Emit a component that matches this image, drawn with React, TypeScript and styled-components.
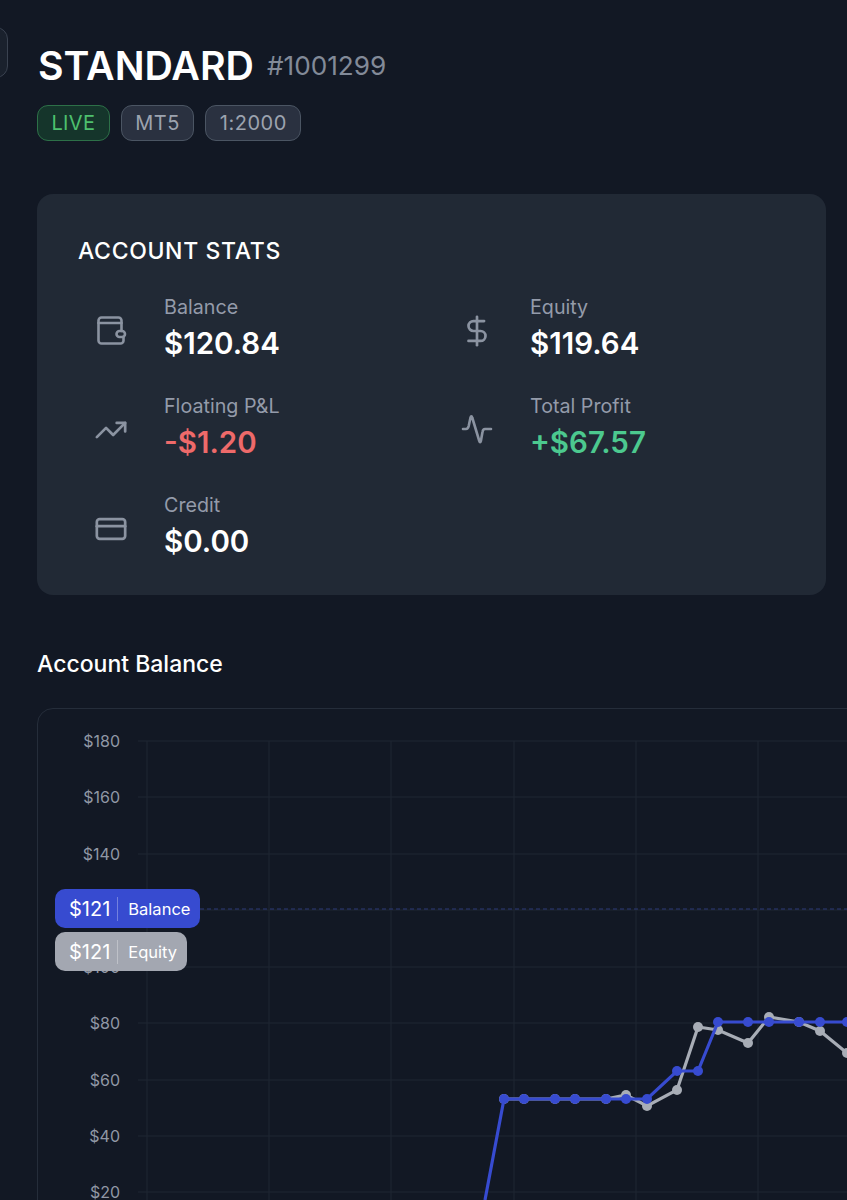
import React from "react";
import styled, { createGlobalStyle } from "styled-components";
import { CreditCard, DollarSign, TrendingUp } from "lucide-react";

const WalletIcon = () => (
  <svg width="34" height="34" viewBox="0 0 34 34" fill="none" stroke="currentColor" strokeWidth="2.6" strokeLinecap="round" strokeLinejoin="round">
    <path d="M27.5 17V6.5a3 3 0 0 0-3-3h-17a3 3 0 0 0-3 3v20a3 3 0 0 0 3 3h19a3 3 0 0 0 3-3V23" />
    <path d="M4.5 9h23" />
    <rect x="22.5" y="17" width="8.5" height="6" rx="3" />
  </svg>
);

const PulseIcon = () => (
  <svg width="34" height="34" viewBox="0 0 34 34" fill="none" stroke="currentColor" strokeWidth="2.6" strokeLinecap="round" strokeLinejoin="round">
    <path d="M3 16h3c1.5 0 2.2-1 2.7-3l1.8-8.5c.4-1.6 1.3-1.6 1.7 0L19.3 28c.4 1.6 1.2 1.6 1.6 0l1.6-9c.3-2 1-3 2.5-3H31" />
  </svg>
);

const stats = [
  { label: "Balance", value: "$120.84", tone: "plain", icon: <WalletIcon /> },
  { label: "Equity", value: "$119.64", tone: "plain", icon: <DollarSign size={34} strokeWidth={1.9} /> },
  { label: "Floating P&L", value: "-$1.20", tone: "loss", icon: <TrendingUp size={34} strokeWidth={1.9} /> },
  { label: "Total Profit", value: "+$67.57", tone: "gain", icon: <PulseIcon /> },
  { label: "Credit", value: "$0.00", tone: "plain", icon: <CreditCard size={34} strokeWidth={1.9} /> },
];

const axis = [
  { label: "$180", y: 741 },
  { label: "$160", y: 797 },
  { label: "$140", y: 854 },
  { label: "$120", y: 910 },
  { label: "$100", y: 967 },
  { label: "$80", y: 1023 },
  { label: "$60", y: 1080 },
  { label: "$40", y: 1136 },
  { label: "$20", y: 1192 },
];

const gridX = [147, 269, 391, 514, 636, 758];

const flat = [
  [504, 1099],
  [524, 1099],
  [555, 1099],
  [575, 1099],
  [606, 1099],
];

const balance = [
  ...flat,
  [626, 1099],
  [647, 1099],
  [677, 1071],
  [698, 1071],
  [718, 1022],
  [748, 1022],
  [769, 1022],
  [799, 1022],
  [820, 1022],
  [847, 1022],
];

const equity = [
  ...flat,
  [626, 1095],
  [647, 1106],
  [677, 1090],
  [698, 1027],
  [718, 1030],
  [748, 1043],
  [769, 1017],
  [799, 1022],
  [820, 1031],
  [847, 1053],
];

const toPoints = (list: number[][]) => list.map((p) => p.join(",")).join(" ");

const App = () => {
  return (
    <Page>
      <GlobalStyle />
      <BackButton />
      <TitleRow>
        <Title>STANDARD</Title>
        <AccountNo>#1001299</AccountNo>
      </TitleRow>
      <Tags>
        <Tag $live>LIVE</Tag>
        <Tag>MT5</Tag>
        <Tag>1:2000</Tag>
      </Tags>

      <StatsCard>
        <CardTitle>ACCOUNT STATS</CardTitle>
        <StatsGrid>
          {stats.map((s) => (
            <Stat key={s.label}>
              <IconCell>{s.icon}</IconCell>
              <div>
                <StatLabel>{s.label}</StatLabel>
                <StatValue $tone={s.tone}>{s.value}</StatValue>
              </div>
            </Stat>
          ))}
        </StatsGrid>
      </StatsCard>

      <SectionTitle>Account Balance</SectionTitle>
      <ChartCard>
        <ChartSvg viewBox="38 709 862 600" width="862" height="600">
          {axis.map((a) => (
            <line key={a.y} x1="138" x2="900" y1={a.y} y2={a.y} stroke="#1e2633" strokeWidth="1" />
          ))}
          {gridX.map((x) => (
            <line key={x} x1={x} x2={x} y1="741" y2="1310" stroke="#1e2633" strokeWidth="1" />
          ))}
          {axis.map((a) => (
            <AxisText key={a.label} x="120" y={a.y + 6} textAnchor="end">
              {a.label}
            </AxisText>
          ))}
          <line x1="200" x2="900" y1="909" y2="909" stroke="#2c3a78" strokeWidth="1" strokeDasharray="4 3" />
          <polyline points={toPoints(equity)} fill="none" stroke="#a8adb6" strokeWidth="3.2" />
          {equity.map(([x, y]) => (
            <circle key={x} cx={x} cy={y} r="5" fill="#a8adb6" />
          ))}
          <polyline points={"485,1200 " + toPoints(balance)} fill="none" stroke="#374bd0" strokeWidth="3.2" />
          {balance.map(([x, y]) => (
            <circle key={x} cx={x} cy={y} r="5" fill="#374bd0" />
          ))}
        </ChartSvg>
        <Flags>
          <Flag $kind="balance">
            <FlagValue>$121</FlagValue>
            <FlagName>Balance</FlagName>
          </Flag>
          <Flag $kind="equity">
            <FlagValue>$121</FlagValue>
            <FlagName>Equity</FlagName>
          </Flag>
        </Flags>
      </ChartCard>
    </Page>
  );
};
export default App;

const GlobalStyle = createGlobalStyle`
  html, body {
    margin: 0;
    background: #121824;
  }

  * {
    box-sizing: border-box;
  }
`;

const Page = styled.div`
  position: relative;
  width: 847px;
  height: 1200px;
  overflow: hidden;
  padding: 39px 0 0 38px;
  background: #121824;
  font-family: Inter, "Liberation Sans", sans-serif;
  color: #ffffff;
`;

const BackButton = styled.div`
  position: absolute;
  top: 27px;
  left: -40px;
  width: 48px;
  height: 51px;
  border: 1.5px solid #3a4250;
  border-radius: 12px;
  background: #1a212d;
`;

const TitleRow = styled.div`
  display: flex;
  align-items: center;
  gap: 13px;
  height: 53px;
`;

const Title = styled.h1`
  margin: 0;
  font-size: 39.3px;
  line-height: 53px;
  font-weight: 600;
`;

const AccountNo = styled.span`
  font-size: 26.2px;
  font-weight: 400;
  color: #828a98;
`;

const Tags = styled.div`
  display: flex;
  gap: 11px;
  margin-top: 13px;
  margin-left: -1px;
`;

const Tag = styled.span<{ $live?: boolean }>`
  display: flex;
  align-items: center;
  height: 36px;
  padding: 0 13.5px;
  border-radius: 11px;
  font-size: 20px;
  letter-spacing: ${(p) => (p.$live ? "0.3px" : "0.5px")};
  border: 1.5px solid ${(p) => (p.$live ? "#2d7048" : "#4b5563")};
  background: ${(p) => (p.$live ? "#15352b" : "#2a3140")};
  color: ${(p) => (p.$live ? "#4ec06e" : "#9ca3af")};
`;

const StatsCard = styled.section`
  width: 789px;
  height: 401px;
  margin: 53px 0 0 -1px;
  padding: 42px 41px 0;
  border-radius: 16px;
  background: #212935;
`;

const CardTitle = styled.h2`
  margin: 0;
  font-size: 23px;
  line-height: 30px;
  font-weight: 500;
  letter-spacing: 0.65px;
`;

const StatsGrid = styled.div`
  display: grid;
  grid-template-columns: 339px 339px;
  grid-auto-rows: 98.8px;
  column-gap: 27px;
  margin-top: 26px;
`;

const Stat = styled.div`
  display: flex;
  align-items: flex-start;
  gap: 21px;
`;

const IconCell = styled.div`
  display: flex;
  align-items: center;
  justify-content: center;
  width: 65px;
  height: 78px;
  color: #8b93a1;
`;

const StatLabel = styled.div`
  font-size: 19.7px;
  line-height: 30px;
  color: #949baa;
`;

const StatValue = styled.div<{ $tone: string }>`
  font-size: 29.5px;
  line-height: 43px;
  font-weight: 600;
  color: ${(p) =>
    p.$tone === "loss" ? "#ee6a6a" : p.$tone === "gain" ? "#4cc98f" : "#ffffff"};
`;

const SectionTitle = styled.h3`
  margin: 53px 0 0 -1px;
  font-size: 23px;
  line-height: 32px;
  font-weight: 500;
`;

const ChartCard = styled.div`
  position: relative;
  width: 900px;
  height: 620px;
  margin: 28px 0 0 -1px;
  border: 1px solid #252d3a;
  border-radius: 16px;
  overflow: hidden;
`;

const ChartSvg = styled.svg`
  display: block;
`;

const AxisText = styled.text`
  font-family: Inter, "Liberation Sans", sans-serif;
  font-size: 16px;
  fill: #9097a5;
`;

const Flags = styled.div`
  position: absolute;
  top: 180px;
  left: 17px;
  display: flex;
  flex-direction: column;
  align-items: flex-start;
  gap: 4px;
`;

const Flag = styled.div<{ $kind: string }>`
  display: flex;
  align-items: center;
  height: 39px;
  padding: 0 10px 0 14px;
  border-radius: 10px;
  background: ${(p) => (p.$kind === "balance" ? "#374bd0" : "#a3a7b1")};
`;

const FlagValue = styled.span`
  padding-right: 7px;
  margin-right: 10px;
  font-size: 20px;
  line-height: 24px;
  border-right: 1px solid rgba(255, 255, 255, 0.3);
`;

const FlagName = styled.span`
  font-size: 16.5px;
`;
